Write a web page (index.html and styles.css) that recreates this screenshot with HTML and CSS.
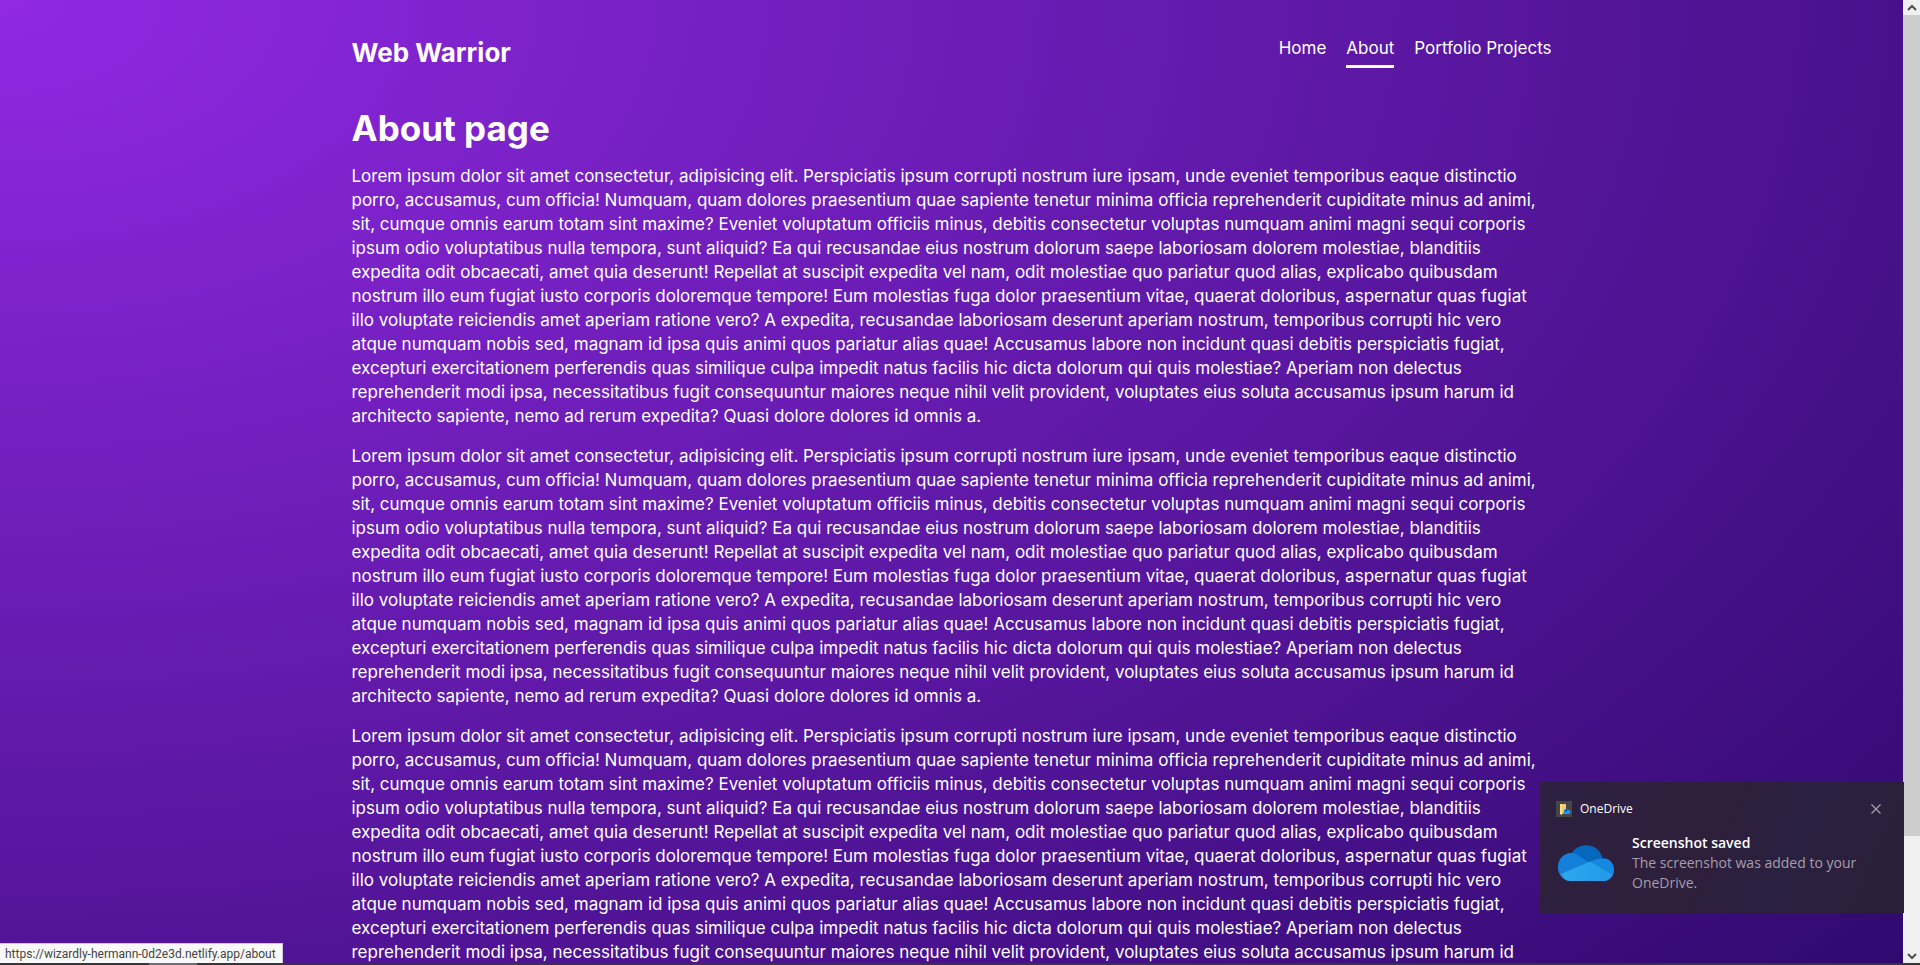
FILE: index.html
```html
<!DOCTYPE html>
<html lang="en">
<head>
<meta charset="utf-8">
<title>Web Warrior | About</title>
<link rel="stylesheet" href="styles.css">
</head>
<body>
<div class="window">
  <div class="viewport">
   <div class="page">
    <div class="layout">
      <nav class="navbar">
        <h1 class="brand">Web Warrior</h1>
        <div class="links">
          <a class="link" href="#home">Home</a>
          <a class="link link-active" href="#about" aria-current="page">About</a>
          <a class="link" href="#projects">Portfolio Projects</a>
        </div>
      </nav>
      <main>
        <h2 class="title">About page</h2>
        <p class="text">Lorem ipsum dolor sit amet consectetur, adipisicing elit. Perspiciatis ipsum corrupti nostrum iure ipsam, unde eveniet temporibus eaque distinctio<br>porro, accusamus, cum officia! Numquam, quam dolores praesentium quae sapiente tenetur minima officia reprehenderit cupiditate minus ad animi,<br>sit, cumque omnis earum totam sint maxime? Eveniet voluptatum officiis minus, debitis consectetur voluptas numquam animi magni sequi corporis<br>ipsum odio voluptatibus nulla tempora, sunt aliquid? Ea qui recusandae eius nostrum dolorum saepe laboriosam dolorem molestiae, blanditiis<br>expedita odit obcaecati, amet quia deserunt! Repellat at suscipit expedita vel nam, odit molestiae quo pariatur quod alias, explicabo quibusdam<br>nostrum illo eum fugiat iusto corporis doloremque tempore! Eum molestias fuga dolor praesentium vitae, quaerat doloribus, aspernatur quas fugiat<br>illo voluptate reiciendis amet aperiam ratione vero? A expedita, recusandae laboriosam deserunt aperiam nostrum, temporibus corrupti hic vero<br>atque numquam nobis sed, magnam id ipsa quis animi quos pariatur alias quae! Accusamus labore non incidunt quasi debitis perspiciatis fugiat,<br>excepturi exercitationem perferendis quas similique culpa impedit natus facilis hic dicta dolorum qui quis molestiae? Aperiam non delectus<br>reprehenderit modi ipsa, necessitatibus fugit consequuntur maiores neque nihil velit provident, voluptates eius soluta accusamus ipsum harum id<br>architecto sapiente, nemo ad rerum expedita? Quasi dolore dolores id omnis a.</p>
        <p class="text">Lorem ipsum dolor sit amet consectetur, adipisicing elit. Perspiciatis ipsum corrupti nostrum iure ipsam, unde eveniet temporibus eaque distinctio<br>porro, accusamus, cum officia! Numquam, quam dolores praesentium quae sapiente tenetur minima officia reprehenderit cupiditate minus ad animi,<br>sit, cumque omnis earum totam sint maxime? Eveniet voluptatum officiis minus, debitis consectetur voluptas numquam animi magni sequi corporis<br>ipsum odio voluptatibus nulla tempora, sunt aliquid? Ea qui recusandae eius nostrum dolorum saepe laboriosam dolorem molestiae, blanditiis<br>expedita odit obcaecati, amet quia deserunt! Repellat at suscipit expedita vel nam, odit molestiae quo pariatur quod alias, explicabo quibusdam<br>nostrum illo eum fugiat iusto corporis doloremque tempore! Eum molestias fuga dolor praesentium vitae, quaerat doloribus, aspernatur quas fugiat<br>illo voluptate reiciendis amet aperiam ratione vero? A expedita, recusandae laboriosam deserunt aperiam nostrum, temporibus corrupti hic vero<br>atque numquam nobis sed, magnam id ipsa quis animi quos pariatur alias quae! Accusamus labore non incidunt quasi debitis perspiciatis fugiat,<br>excepturi exercitationem perferendis quas similique culpa impedit natus facilis hic dicta dolorum qui quis molestiae? Aperiam non delectus<br>reprehenderit modi ipsa, necessitatibus fugit consequuntur maiores neque nihil velit provident, voluptates eius soluta accusamus ipsum harum id<br>architecto sapiente, nemo ad rerum expedita? Quasi dolore dolores id omnis a.</p>
        <p class="text">Lorem ipsum dolor sit amet consectetur, adipisicing elit. Perspiciatis ipsum corrupti nostrum iure ipsam, unde eveniet temporibus eaque distinctio<br>porro, accusamus, cum officia! Numquam, quam dolores praesentium quae sapiente tenetur minima officia reprehenderit cupiditate minus ad animi,<br>sit, cumque omnis earum totam sint maxime? Eveniet voluptatum officiis minus, debitis consectetur voluptas numquam animi magni sequi corporis<br>ipsum odio voluptatibus nulla tempora, sunt aliquid? Ea qui recusandae eius nostrum dolorum saepe laboriosam dolorem molestiae, blanditiis<br>expedita odit obcaecati, amet quia deserunt! Repellat at suscipit expedita vel nam, odit molestiae quo pariatur quod alias, explicabo quibusdam<br>nostrum illo eum fugiat iusto corporis doloremque tempore! Eum molestias fuga dolor praesentium vitae, quaerat doloribus, aspernatur quas fugiat<br>illo voluptate reiciendis amet aperiam ratione vero? A expedita, recusandae laboriosam deserunt aperiam nostrum, temporibus corrupti hic vero<br>atque numquam nobis sed, magnam id ipsa quis animi quos pariatur alias quae! Accusamus labore non incidunt quasi debitis perspiciatis fugiat,<br>excepturi exercitationem perferendis quas similique culpa impedit natus facilis hic dicta dolorum qui quis molestiae? Aperiam non delectus<br>reprehenderit modi ipsa, necessitatibus fugit consequuntur maiores neque nihil velit provident, voluptates eius soluta accusamus ipsum harum id</p>
      </main>
    </div>
   </div>
  </div>
  <div class="scrollbar">
    <button class="arrow" type="button" aria-label="Scroll up"><svg width="10" height="8" viewBox="0 0 10 8"><path d="M1 6 5 2 9 6" fill="none" stroke="#505050" stroke-width="2"/></svg></button>
    <div class="track"><div class="thumb"></div></div>
    <button class="arrow" type="button" aria-label="Scroll down"><svg width="10" height="8" viewBox="0 0 10 8"><path d="M1 2 5 6 9 2" fill="none" stroke="#505050" stroke-width="2"/></svg></button>
  </div>
  <div class="edge"><div class="edge-mark"></div></div>
</div>

<div class="status">https://wizardly-hermann-0d2e3d.netlify.app/about</div>

<aside class="toast" role="status">
  <header class="toast-head">
    <svg width="16" height="16" viewBox="0 0 16 16">
      <path fill="#474747" d="M0 0h16v16H0z"/>
      <path fill="#f3cd74" d="M4 3h6v9l-4 1H4z"/>
      <path fill="#ffe08a" d="M4 3l2 1v10l-2-1z"/>
      <path fill="#1d9bea" d="M8 13a2 2 0 0 1 0-3 2.400 2.400 0 0 1 4-1 2 2 0 0 1 1 4z"/>
      <path fill="#0a63b8" d="M8 10a2.400 2.400 0 0 1 4-1l-2 2z"/>
    </svg>
    <span class="toast-app">OneDrive</span>
    <button class="toast-close" type="button" aria-label="Close"><svg width="10" height="10" viewBox="0 0 10 10"><path d="M0.500 0.500 9.500 9.500M9.500 0.500 0.500 9.500" stroke="#a9a3b1" stroke-width="1.200"/></svg></button>
  </header>
  <div class="toast-body">
    <svg class="cloud" width="56" height="36" viewBox="0 0 56 36">
      <defs>
        <clipPath id="cloud-shape"><path d="M13 36C5 36 0 29 0 22C0 14 6 8 14 8C20-3 40-3 44.500 13C51 13 56 18 56 25C56 31 51 36 45 36Z"/></clipPath>
        <linearGradient id="front" x1="0" y1="0" x2="1" y2="0"><stop offset="0" stop-color="#2ba9ed"/><stop offset="1" stop-color="#2299e8"/></linearGradient>
      </defs>
      <g clip-path="url(#cloud-shape)">
        <path fill="#0668bc" d="M0 0h56v36H0z"/>
        <path fill="#1580da" d="M0 8.500C8 7 16 7 21 11L56 34V36H0Z"/>
        <path fill="#1389df" d="M32 17C38 13 46 12 56 16V36H32Z"/>
        <path fill="url(#front)" d="M3 29 32 16.500 55 30V36H8Z"/>
      </g>
    </svg>
    <div class="toast-copy">
      <strong class="toast-title">Screenshot saved</strong>
      <p class="toast-text">The screenshot was added to your OneDrive.</p>
    </div>
  </div>
</aside>
</body>
</html>
```

FILE: styles.css
```css
* { box-sizing: border-box; margin: 0; padding: 0; }

body { overflow: hidden; font-family: Inter, sans-serif; color: #fff; }

button { border: 0; background: none; display: flex; align-items: center; justify-content: center; }

.window {
  display: grid;
  grid-template: minmax(0, 1fr) 2px / minmax(0, 1fr) 17px;
  height: 100vh;
}

.viewport { overflow: hidden; }

.page {
  min-height: 100%;
  padding-bottom: 148px;
  background: radial-gradient(at top left, #9129e3, #2a0767);
}

.layout { max-width: 1200px; margin: 0 auto; }

.navbar {
  display: flex;
  justify-content: space-between;
  padding: 36px 0 0;
}

.brand { font-size: 26px; line-height: 34px; }

.links { display: flex; align-items: flex-start; gap: 20px; }

.link {
  color: #fff;
  text-decoration: none;
  font-size: 17px;
  line-height: 24px;
  padding-bottom: 5px;
  border-bottom: 3px solid transparent;
}

.link-active { border-color: #fff; }

.title { font-size: 35px; line-height: 40px; margin-top: 38px; }

.text { font-size: 17px; line-height: 24px; margin-top: 16px; white-space: nowrap; }

.scrollbar { display: flex; flex-direction: column; background: #f0f0f0; }
.arrow { height: 15px; }
.track { flex: 1; }
.thumb { height: 88%; background: #cdcdcd; }

.edge { grid-column: 1 / -1; background: #38343c; }
.edge-mark { width: 48px; height: 2px; margin-left: 149px; background: #706c74; }

.status {
  position: fixed;
  left: 0;
  bottom: 2px;
  padding: 1px 6px 0 5px;
  border: solid #d0c8d8;
  border-width: 1px 1px 0 0;
  background: #f9f9f9;
  color: #444;
  font: 12px/18px Roboto, sans-serif;
}

.toast {
  position: fixed;
  right: 16px;
  bottom: 52px;
  width: 364px;
  height: 131px;
  padding: 18px 16px;
  background: linear-gradient(115deg, #2d2040, #2e1f3b 45%, #2a2040 65%, #2b203a);
  font-family: "Open Sans", sans-serif;
}

.toast-head { display: flex; align-items: center; gap: 8px; height: 18px; }
.toast-app { flex: 1; font-size: 12px; line-height: 16px; }
.toast-close { width: 24px; height: 16px; }
.toast-body { display: flex; gap: 18px; padding: 15px 0 0 2px; }
.cloud { margin-top: 12px; flex: none; }
.toast-title { display: block; font-size: 14px; line-height: 20px; font-weight: 600; }
.toast-text { font-size: 14px; line-height: 20px; color: #a59eac; }
```
